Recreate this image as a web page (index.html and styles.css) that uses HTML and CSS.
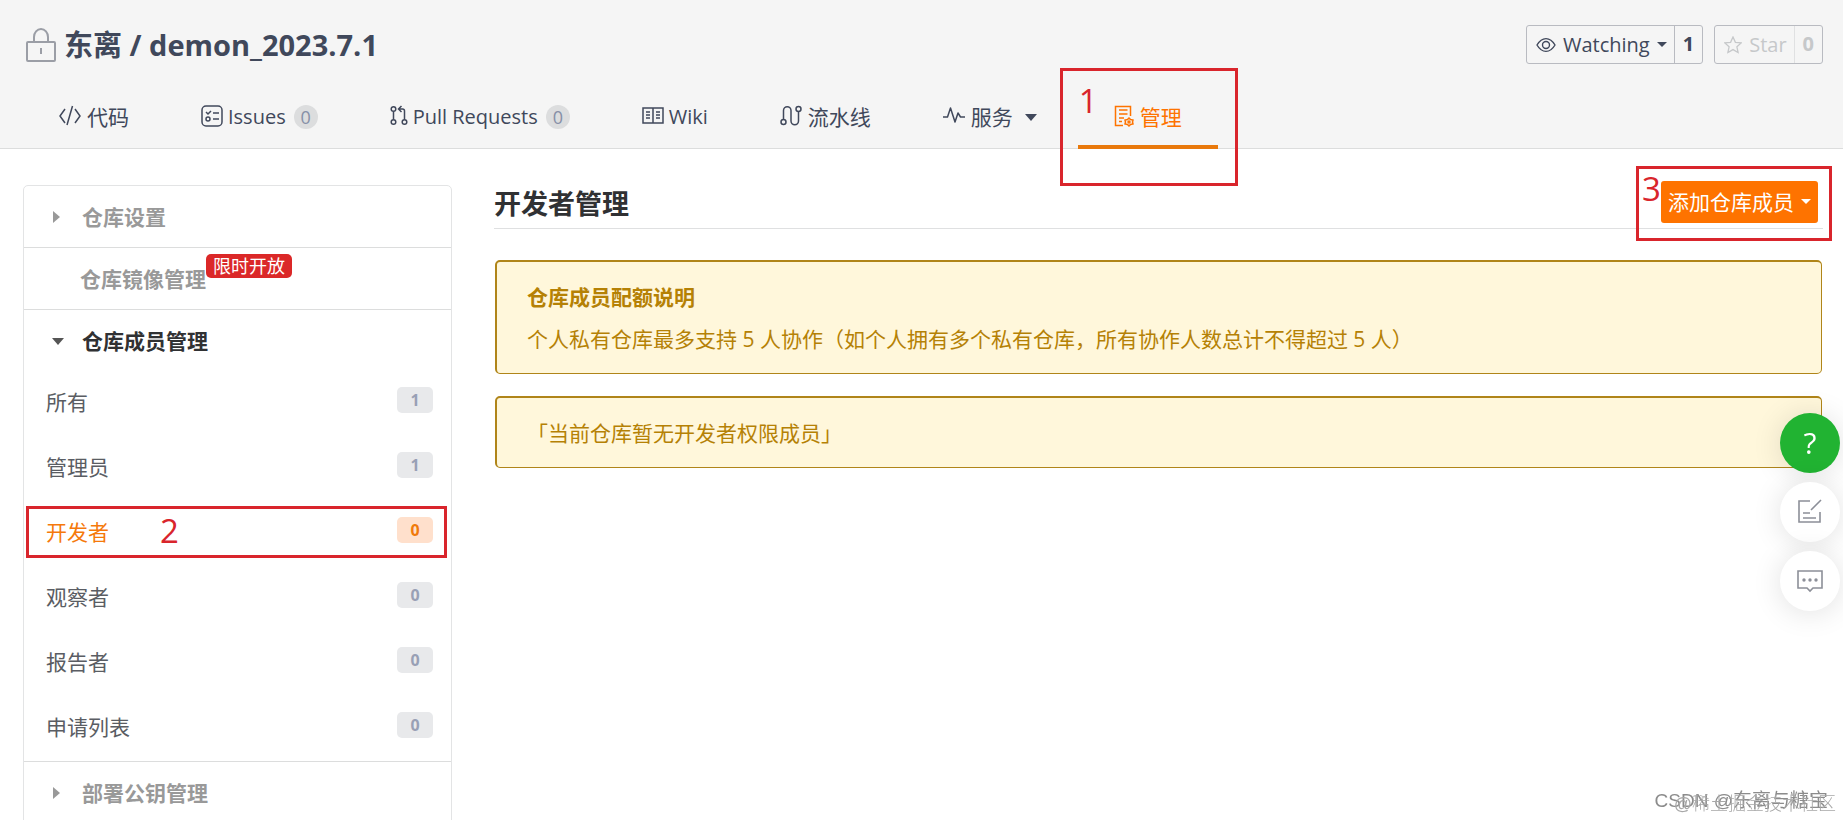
FILE: index.html
```html
<!DOCTYPE html>
<html lang="zh-CN">
<head>
    <meta charset="UTF-8">
    <meta name="viewport" content="width=device-width, initial-scale=1.0">
    <title>东离 / demon_2023.7.1</title>
    <link rel="stylesheet" href="styles.css">
</head>
<body>
    <header class="repo-header">
        <div class="repo-top">
            <h1 class="repo-title">
                <svg class="lock" width="30" height="34" viewBox="0 0 30 34" fill="none" stroke="#9b9ea6" stroke-width="2">
                    <rect x="1" y="14" width="28" height="19" rx="1"/>
                    <path d="M8 14V9a7 8 0 0 1 14 0v5M15 20v6"/>
                </svg>
                <a href="#">东离 / demon_2023.7.1</a>
            </h1>
            <div class="repo-actions">
                <div class="action-group">
                    <button class="action" type="button">
                        <svg width="20" height="16" viewBox="0 0 20 16" fill="none" stroke="currentColor" stroke-width="1.4">
                            <path d="M1 8c5-8.500 13-8.500 18 0c-5 8.500-13 8.500-18 0z"/>
                            <circle cx="10" cy="8" r="3.500"/>
                        </svg>
                        <span>Watching</span>
                        <i class="caret"></i>
                    </button>
                    <a class="action-count" href="#">1</a>
                </div>
                <div class="action-group disabled">
                    <button class="action" type="button" disabled>
                        <svg width="18" height="18" viewBox="0 0 18 18" fill="none" stroke="currentColor" stroke-width="1.3">
                            <path d="M9 1l2.400 5.300 5.800.6-4.300 3.900 1.200 5.700L9 13.600l-5.100 2.900 1.200-5.700L.8 6.900l5.800-.6z"/>
                        </svg>
                        <span>Star</span>
                    </button>
                    <a class="action-count" href="#">0</a>
                </div>
            </div>
        </div>
        <nav class="tabs">
            <a class="tab" href="#">
                <svg width="22" height="24" viewBox="0 0 22 24" fill="none" stroke="currentColor" stroke-width="1.5">
                    <path d="M6 4L1 11l5 7M16 4l5 7-5 7M13.500 1L8 20"/>
                </svg>
                代码
            </a>
            <a class="tab tab-latin" href="#">
                <svg width="22" height="24" viewBox="0 0 22 24" fill="none" stroke="currentColor" stroke-width="1.500">
                    <rect x="1" y="1" width="20" height="20" rx="4"/>
                    <path d="M5 7l2 2 3-3M12 8h6M12 14h6"/>
                    <circle cx="7" cy="14" r="2"/>
                </svg>
                Issues
                <span class="tab-count">0</span>
            </a>
            <a class="tab tab-latin" href="#">
                <svg width="18" height="24" viewBox="0 0 18 24" fill="none" stroke="currentColor" stroke-width="1.500">
                    <circle cx="3.500" cy="4" r="2.300"/>
                    <circle cx="3.500" cy="17" r="2.300"/>
                    <circle cx="14.500" cy="17" r="2.300"/>
                    <path d="M3.500 6.500v8M14.500 14.500V6q0-2-2-2H9M11.500 1L8.500 4l3 3"/>
                </svg>
                Pull Requests
                <span class="tab-count">0</span>
            </a>
            <a class="tab tab-latin" href="#">
                <svg width="22" height="24" viewBox="0 0 22 24" fill="none" stroke="currentColor" stroke-width="1.500">
                    <path d="M1 3h20v15H1zM11 3v15M4 7h4M4 10h4M4 13h4M14 7h4M14 10h4M14 13h4"/>
                </svg>
                Wiki
            </a>
            <a class="tab" href="#">
                <svg width="22" height="24" viewBox="0 0 22 24" fill="none" stroke="currentColor" stroke-width="1.500">
                    <circle cx="3.500" cy="17" r="2.500"/>
                    <circle cx="18.500" cy="4" r="2.500"/>
                    <path d="M3.500 14.500V5.500a3.700 3.700 0 0 1 7.500 0v10.500a3.700 3.700 0 0 0 7.500 0V6.500"/>
                </svg>
                流水线
            </a>
            <a class="tab tab-menu" href="#">
                <svg width="22" height="24" viewBox="0 0 22 24" fill="none" stroke="currentColor" stroke-width="1.500" stroke-linejoin="round">
                    <path d="M0 12h4.500l3-9 4.500 14 3-9 2.500 4H22"/>
                </svg>
                服务
                <i class="caret caret-lg"></i>
            </a>
            <a class="tab active" href="#">
                <svg width="20" height="24" viewBox="0 0 20 24" fill="none" stroke="currentColor" stroke-width="1.500">
                    <path d="M9 20.500H1.500v-19h15V11M5 5h8.500M5 9h8.500M5 13h5M5 16.500h3"/>
                    <path d="M15 13l1.500 1.500 2.500.5-.5 2 .5 2-2.500.5L15 21l-1.500-1.500-2.500-.5.500-2-.5-2 2.500-.5z"/>
                    <circle cx="15" cy="17" r="1"/>
                </svg>
                管理
                <span class="mark mark-tab">1</span>
            </a>
        </nav>
    </header>

    <div class="container">
        <aside class="sidebar">
            <a class="menu-title" href="#"><i class="caret caret-right"></i>仓库设置</a>
            <a class="menu-title no-caret" href="#">仓库镜像管理<span class="tag">限时开放</span></a>
            <div class="menu-group">
                <a class="menu-title open" href="#"><i class="caret caret-lg"></i>仓库成员管理</a>
                <a class="menu-item" href="#">所有<span class="badge">1</span></a>
                <a class="menu-item" href="#">管理员<span class="badge">1</span></a>
                <a class="menu-item active" href="#">开发者<span class="badge">0</span><span class="mark mark-item">2</span></a>
                <a class="menu-item" href="#">观察者<span class="badge">0</span></a>
                <a class="menu-item" href="#">报告者<span class="badge">0</span></a>
                <a class="menu-item" href="#">申请列表<span class="badge">0</span></a>
            </div>
            <a class="menu-title" href="#"><i class="caret caret-right"></i>部署公钥管理</a>
        </aside>

        <main class="content">
            <div class="content-header">
                <h2>开发者管理</h2>
                <div class="add-member">
                    <button class="add-button" type="button">添加仓库成员<i class="caret"></i></button>
                    <span class="mark mark-add">3</span>
                </div>
            </div>
            <div class="message">
                <h3>仓库成员配额说明</h3>
                <p>个人私有仓库最多支持 5 人协作（如个人拥有多个私有仓库，所有协作人数总计不得超过 5 人）</p>
            </div>
            <div class="message">
                <p>「当前仓库暂无开发者权限成员」</p>
            </div>
        </main>
    </div>

    <div class="float-tools">
        <button class="float-button help" type="button">?</button>
        <button class="float-button" type="button" aria-label="反馈">
            <svg width="26" height="26" viewBox="0 0 26 26" fill="none" stroke="#8c8f98" stroke-width="1.600">
                <path d="M13 2H2v21h21V13M24 1l-10 10M6 14h7M6 19h13"/>
            </svg>
        </button>
        <button class="float-button" type="button" aria-label="评论">
            <svg width="26" height="26" viewBox="0 0 26 26" fill="none" stroke="#8c8f98" stroke-width="1.600">
                <path d="M1 3h24v17H16l-3 3-3-3H1z"/>
                <g fill="#8c8f98" stroke="none"><circle cx="7" cy="12" r="1.700"/><circle cx="13" cy="12" r="1.700"/><circle cx="19" cy="12" r="1.700"/></g>
            </svg>
        </button>
    </div>

    <div class="watermark csdn">CSDN @东离与糖宝</div>
    <div class="watermark juejin">@稀土掘金技术社区</div>
</body>
</html>
```
FILE: styles.css
```css
* {
    box-sizing: border-box;
}

html {
    scrollbar-width: none;
}

body {
    margin: 0;
    font-family: "Open Sans", "Noto Sans CJK SC", sans-serif;
    font-size: 21px;
    line-height: 32px;
    color: #40485b;
    background: #fff;
}

a {
    color: inherit;
    text-decoration: none;
}

button {
    font: inherit;
    color: inherit;
    border: none;
    background: none;
    cursor: pointer;
}

h1, h2, h3, p {
    margin: 0;
}

svg {
    flex: none;
}

/* header */
.repo-header {
    background: #f5f5f5;
    border-bottom: 1px solid #dcdddd;
}

.repo-top {
    display: flex;
    justify-content: space-between;
    align-items: center;
    height: 89px;
    padding: 0 20px 0 26px;
}

.repo-title {
    display: flex;
    align-items: center;
    gap: 8px;
    font-size: 29px;
    line-height: 40px;
}

.repo-actions {
    display: flex;
    gap: 11px;
}

.action-group {
    display: flex;
    height: 39px;
    border: 1px solid #b9bbc1;
    border-radius: 3px;
    font-size: 20px;
}

.action {
    display: flex;
    align-items: center;
    gap: 7px;
    padding: 0 7px 0 9px;
}

.action-count {
    padding: 2px 8px;
    border-left: 1px solid #b9bbc1;
    font-weight: 700;
}

.disabled {
    color: #c6c8ca;
}

.disabled .action-count {
    border-color: #e0e1e2;
}

.caret {
    border: 5px solid transparent;
    border-top-color: currentColor;
    border-bottom: none;
}

.caret-lg {
    border-width: 7px 6px 0;
}

.caret-right {
    border: 6px solid transparent;
    border-left: 7px solid currentColor;
    border-right: none;
}

/* tabs */
.tabs {
    display: flex;
    height: 59px;
    padding-left: 23px;
}

.tab {
    display: flex;
    align-items: center;
    gap: 6px;
    height: 60px;
    padding: 0 36px 4px;
}

.tab-latin {
    gap: 5px;
    font-size: 20px;
}

.tab-menu {
    padding-right: 41px;
}

.tab-menu .caret {
    margin-left: 6px;
}

.tab.active {
    position: relative;
    padding-bottom: 0;
    border-bottom: 4px solid #e9790b;
    color: #fe7300;
}

.tab-count {
    width: 24px;
    margin-left: 3px;
    border-radius: 12px;
    background: #dcddde;
    color: #8790a7;
    font-size: 18px;
    line-height: 24px;
    text-align: center;
}

/* layout */
.container {
    display: flex;
    align-items: flex-start;
    gap: 42px;
    padding: 36px 20px 0 23px;
}

.sidebar {
    flex: 0 0 429px;
    border: 1px solid #e3e4e5;
    border-radius: 5px;
}

.menu-title {
    display: flex;
    align-items: center;
    gap: 22px;
    height: 62px;
    padding-left: 29px;
    border-bottom: 1px solid #dcdddd;
    color: #999;
    font-weight: 700;
}

.menu-title.no-caret {
    gap: 0;
    padding-left: 56px;
}

.menu-title.open {
    gap: 18px;
    margin-bottom: -3px;
    padding-left: 28px;
    border-bottom: none;
    color: #303133;
}

.open .caret {
    color: #555;
}

.menu-title:last-child {
    border-bottom: none;
}

.menu-group {
    padding-bottom: 2px;
    border-bottom: 1px solid #dcdddd;
}

.tag {
    margin: 0 0 26px;
    padding: 0 7px;
    border-radius: 5px;
    background: #db2828;
    color: #fff;
    font-size: 18px;
    font-weight: 400;
    line-height: 24px;
}

.menu-item {
    position: relative;
    display: flex;
    justify-content: space-between;
    align-items: center;
    height: 65px;
    padding: 0 18px 0 22px;
    color: #5a5d63;
}

.menu-item.active {
    color: #f5790b;
}

.badge {
    width: 36px;
    margin-bottom: 4px;
    border-radius: 5px;
    background: #e8e9eb;
    color: #98a0b5;
    font-size: 16px;
    font-weight: 700;
    line-height: 26px;
    text-align: center;
}

.active .badge {
    background: #ffe0cc;
    color: #f07a0a;
}

/* content */
.content {
    flex: 1;
    min-width: 0;
}

.content-header {
    display: flex;
    justify-content: space-between;
    align-items: center;
    height: 44px;
    margin-bottom: 31px;
    padding-bottom: 5px;
    border-bottom: 1px solid #dfe0e1;
}

h2 {
    color: #303133;
    font-size: 27px;
}

.add-member {
    position: relative;
    margin: -5px 5px 0 0;
}

.add-button {
    display: flex;
    align-items: center;
    gap: 7px;
    height: 42px;
    padding: 0 7px;
    border-radius: 3px;
    background: #fe7300;
    color: #fff;
}

.message {
    margin: 0 1px 22px 1px;
    padding: 19px 30px 18px;
    border: 1px solid #b08519;
    border-width: 2px 1px 1px 2px;
    border-radius: 5px;
    background: #fff7db;
    color: #b58105;
}

h3 {
    margin-bottom: 10px;
    font-size: 21px;
}

/* red boxes with step numbers */
.mark {
    position: absolute;
    border: 3px solid #d9252c;
    color: #d9252c;
    font-size: 33px;
    line-height: 40px;
    pointer-events: none;
}

.mark-tab {
    inset: -21px -20px -41px -18px;
    padding: 10px 16px;
}

.mark-item {
    inset: 7px 4px 6px 2px;
    padding: 2px 131px;
}

.mark-add {
    inset: -15px -14px -18px -25px;
    padding-left: 3px;
}

/* floating buttons */
.float-tools {
    position: fixed;
    top: 413px;
    right: 3px;
    display: flex;
    flex-direction: column;
    gap: 9px;
}

.float-button {
    display: flex;
    justify-content: center;
    align-items: center;
    width: 60px;
    height: 60px;
    padding: 0;
    border-radius: 50%;
    background: #fff;
    box-shadow: 0 2px 30px rgba(0, 0, 0, 0.12);
}

.float-button.help {
    background: #21b332;
    color: #fff;
    font-size: 30px;
}

/* watermarks */
.watermark {
    position: fixed;
    bottom: 3px;
    color: #8c8c8c;
    font-family: "Liberation Sans", "Noto Sans CJK SC", sans-serif;
    font-size: 19px;
    white-space: nowrap;
}

.csdn {
    right: 15px;
}

.juejin {
    right: 7px;
    bottom: 0;
    color: #a8a8a8;
    font-size: 18px;
    font-weight: 300;
}
```
